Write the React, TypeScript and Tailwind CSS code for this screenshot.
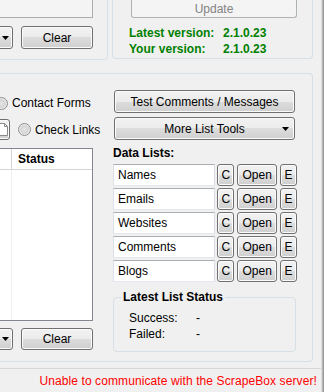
import React from "react";

const btn =
  "flex items-center justify-center border border-[#707070] rounded-[3px] bg-[linear-gradient(#f2f2f2_0%,#ebebeb_50%,#dddddd_50%,#cfcfcf_100%)] shadow-[inset_0_0_0_1px_#fbfbfb] text-black leading-none";

const box = "bg-white border border-[#abadb3] border-x-[#dbdfe6] border-b-[#e3e9ef]";

function Arrow() {
  return (
    <svg width="7" height="4" viewBox="0 0 7 4">
      <path d="M0 0H7L3.5 4Z" fill="#000" />
    </svg>
  );
}

function Radio() {
  return (
    <div className="w-[13px] h-[13px] shrink-0 rounded-full border border-[#8e8f8f] bg-[radial-gradient(circle_at_50%_50%,#e8e8e8_0%,#d4d4d4_45%,#f6f6f6_80%,#ffffff_100%)]" />
  );
}

function ListRow({ name }: { name: string }) {
  return (
    <div className="flex items-center h-[22px]">
      <div className={`${box} w-[103px] h-[22px] flex items-center pl-[4px] text-[12px]`}>{name}</div>
      <div className={`${btn} ml-[2px] w-[17px] h-[22px] text-[12px]`}>C</div>
      <div className={`${btn} ml-[3px] w-[40px] h-[22px] text-[12px]`}>Open</div>
      <div className={`${btn} ml-[3px] w-[17px] h-[22px] text-[12px]`}>E</div>
    </div>
  );
}

export default function App() {
  return (
    <div
      className="flex w-[324px] h-[392px] bg-[#f0f0f0] overflow-hidden text-[12px] text-black"
      style={{ fontFamily: '"Liberation Sans", Arial, sans-serif' }}
    >
      <div className="w-[321px] flex flex-col">
        {/* top row */}
        <div className="flex h-[73px] shrink-0">
          <div className="w-[108px] h-[60px] border-r border-b border-[#d5dfe5] rounded-br-[4px] flex flex-col">
            <div className="w-[93px] h-[18px] border-r border-b border-[#abadb3] bg-[#f4f4f4]" />
            <div className="flex mt-[8px]">
              <div className={`${btn} -ml-[3px] w-[16px] h-[23px]`}>
                <Arrow />
              </div>
              <div className={`${btn} ml-[8px] w-[72px] h-[23px] text-[12px]`}>Clear</div>
            </div>
          </div>
          <div className="ml-[4px] w-[201px] h-[59px] border-x border-b border-[#d5dfe5] rounded-b-[4px] flex flex-col">
            <div className="ml-[18px] w-[166px] h-[18px] border border-t-0 border-[#adb2b5] rounded-b-[3px] bg-[#f4f4f4] text-[#838383] flex items-center justify-center text-[12px] leading-none">
              Update
            </div>
            <div className="mt-[7px] ml-[16px] text-[#008000] font-bold text-[12px] leading-[16px]">
              <div className="flex">
                <span className="w-[94px]">Latest version:</span>
                <span>2.1.0.23</span>
              </div>
              <div className="flex">
                <span className="w-[94px]">Your version:</span>
                <span>2.1.0.23</span>
              </div>
            </div>
          </div>
        </div>

        {/* middle group */}
        <div className="w-[313px] h-[289px] shrink-0 border-t border-r border-b border-[#d5dfe5] rounded-r-[4px] flex">
          {/* left column */}
          <div className="w-[107px] flex flex-col">
            <div className="flex items-center h-[14px] mt-[22px] -ml-[5px]">
              <Radio />
              <span className="ml-[4px]">Contact Forms</span>
            </div>
            <div className="flex items-center h-[21px] mt-[9px]">
              <div className={`${btn} -ml-[11px] w-[21px] h-[21px]`}>
                <svg width="12" height="13" viewBox="0 0 12 13" className="ml-[6px]">
                  <path d="M1.5 0.5H7.5L10.5 3.5V12.5H1.5Z" fill="#fff" stroke="#8a8a8a" />
                  <path d="M7.5 0.5V3.5H10.5" fill="none" stroke="#8a8a8a" />
                </svg>
              </div>
              <div className="ml-[8px]">
                <Radio />
              </div>
              <span className="ml-[4px]">Check Links</span>
            </div>
            <div className="mt-[8px] -ml-[1px] w-[94px] h-[173px] bg-white border border-[#828790] flex flex-col">
              <div className="flex h-[21px] border-b border-[#d5d5d5] bg-white">
                <div className="w-[12px] border-r border-[#d5d5d5]" />
                <div className="pl-[6px] flex items-center font-bold">Status</div>
              </div>
              <div className="flex-1 flex">
                <div className="w-[12px] border-r border-[#f0f0f0]" />
              </div>
            </div>
            <div className="flex mt-[7px]">
              <div className={`${btn} -ml-[3px] w-[16px] h-[22px]`}>
                <Arrow />
              </div>
              <div className={`${btn} ml-[8px] w-[72px] h-[22px] text-[12px]`}>Clear</div>
            </div>
          </div>

          {/* right column */}
          <div className="ml-[6px] w-[184px] flex flex-col">
            <div className={`${btn} mt-[16px] ml-[1px] w-[181px] h-[23px] text-[12px]`}>
              Test Comments / Messages
            </div>
            <div className={`${btn} mt-[4px] ml-[1px] w-[181px] h-[23px] text-[12px] relative`}>
              More List Tools
              <span className="absolute right-[5px] top-[9px] flex">
                <Arrow />
              </span>
            </div>
            <div className="mt-[6px] h-[14px] font-bold leading-[14px]">Data Lists:</div>
            <div className="mt-[4px] flex flex-col gap-[2px]">
              <ListRow name="Names" />
              <ListRow name="Emails" />
              <ListRow name="Websites" />
              <ListRow name="Comments" />
              <ListRow name="Blogs" />
            </div>
            <fieldset className="mt-[8px] w-[183px] h-[62px] border border-[#d5dfe5] rounded-[4px] px-0 pb-0 m-0">
              <legend className="ml-[7px] px-[2px] font-bold leading-[14px]">Latest List Status</legend>
              <div className="ml-[15px] mt-[6px] leading-[16px]">
                <div className="flex">
                  <span className="w-[67px]">Success:</span>
                  <span>-</span>
                </div>
                <div className="flex">
                  <span className="w-[67px]">Failed:</span>
                  <span>-</span>
                </div>
              </div>
            </fieldset>
          </div>
        </div>

        {/* status bar */}
        <div className="mt-[6px] flex-1 border-t border-[#d7d7d7] flex items-center justify-end pr-[4px]">
          <span className="text-[#ff0000] text-[12px] tracking-[0.1px]">Unable to communicate with the ScrapeBox server!</span>
        </div>
      </div>
      <div className="w-[3px] h-full border-l border-[#dcdcdc] bg-[linear-gradient(90deg,#c8c8c8,#8a8a8a)]" />
    </div>
  );
}
